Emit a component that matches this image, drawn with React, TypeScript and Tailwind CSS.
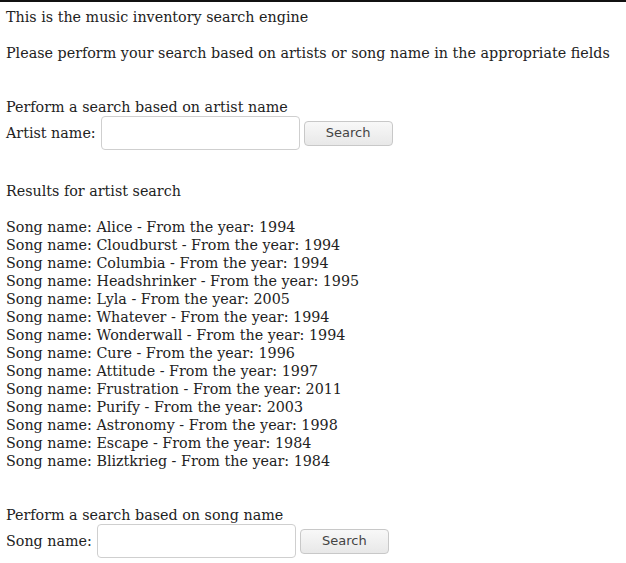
import React, { useState } from 'react';

const songs: { name: string; year: number }[] = [
  { name: 'Alice', year: 1994 },
  { name: 'Cloudburst', year: 1994 },
  { name: 'Columbia', year: 1994 },
  { name: 'Headshrinker', year: 1995 },
  { name: 'Lyla', year: 2005 },
  { name: 'Whatever', year: 1994 },
  { name: 'Wonderwall', year: 1994 },
  { name: 'Cure', year: 1996 },
  { name: 'Attitude', year: 1997 },
  { name: 'Frustration', year: 2011 },
  { name: 'Purify', year: 2003 },
  { name: 'Astronomy', year: 1998 },
  { name: 'Escape', year: 1984 },
  { name: 'Bliztkrieg', year: 1984 },
];

interface SearchRowProps {
  label: string;
  value: string;
  onChange: (v: string) => void;
}

const SearchRow: React.FC<SearchRowProps> = ({ label, value, onChange }) => (
  <div className="flex items-center">
    <span>{label}</span>
    <input
      value={value}
      onChange={(e) => onChange(e.target.value)}
      className="ml-[5px] h-[34px] w-[199px] rounded-[4px] border border-[#cfcfcf] bg-white px-2 outline-none"
    />
    <button className="ml-[4px] h-[25px] w-[89px] rounded-[4px] border border-[#c8c8c8] bg-gradient-to-b from-[#f8f8f8] to-[#e8e8e8] text-[13px] text-[#444] font-['DejaVu_Sans',sans-serif]">
      Search
    </button>
  </div>
);

export default function App() {
  const [artist, setArtist] = useState('');
  const [song, setSong] = useState('');

  return (
    <div className="min-h-[563px] border-t-2 border-[#111] bg-white px-[6px] font-['DejaVu_Serif',serif] text-[14.3px] leading-[18px] text-[#222]">
      <p className="mt-[6px]">This is the music inventory search engine</p>
      <p className="mt-[18px]">Please perform your search based on artists or song name in the appropriate fields</p>

      {/* Artist search */}
      <p className="mt-[36px]">Perform a search based on artist name</p>
      <SearchRow label="Artist name:" value={artist} onChange={setArtist} />

      <p className="mt-[32px]">Results for artist search</p>
      <ul className="mt-[18px]">
        {songs.map((s) => (
          <li key={s.name}>
            Song name: {s.name} - From the year: {s.year}
          </li>
        ))}
      </ul>

      {/* Song search */}
      <p className="mt-[36px]">Perform a search based on song name</p>
      <SearchRow label="Song name:" value={song} onChange={setSong} />
    </div>
  );
}
